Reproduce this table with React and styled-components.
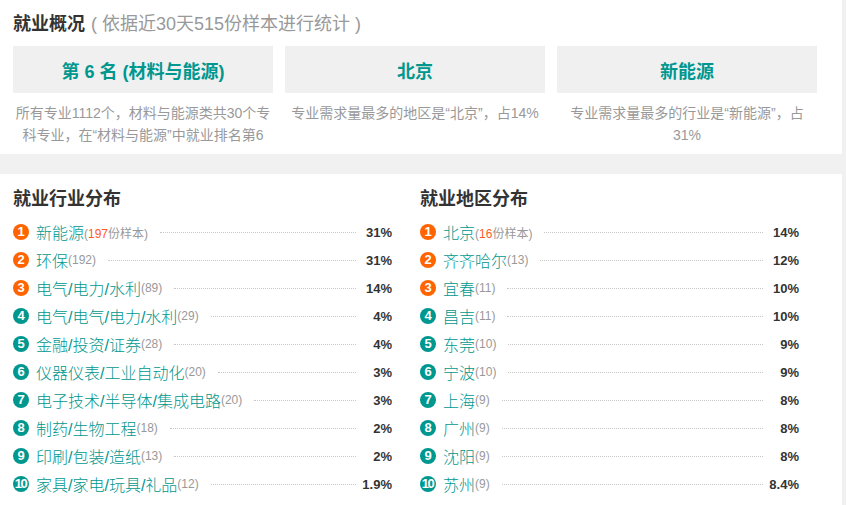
import React from 'react';
import styled, { createGlobalStyle } from 'styled-components';

const industries = [
  { name: '新能源', count: 197, pct: '31%' },
  { name: '环保', count: 192, pct: '31%' },
  { name: '电气/电力/水利', count: 89, pct: '14%' },
  { name: '电气/电气/电力/水利', count: 29, pct: '4%' },
  { name: '金融/投资/证券', count: 28, pct: '4%' },
  { name: '仪器仪表/工业自动化', count: 20, pct: '3%' },
  { name: '电子技术/半导体/集成电路', count: 20, pct: '3%' },
  { name: '制药/生物工程', count: 18, pct: '2%' },
  { name: '印刷/包装/造纸', count: 13, pct: '2%' },
  { name: '家具/家电/玩具/礼品', count: 12, pct: '1.9%' },
];

const regions = [
  { name: '北京', count: 16, pct: '14%' },
  { name: '齐齐哈尔', count: 13, pct: '12%' },
  { name: '宜春', count: 11, pct: '10%' },
  { name: '昌吉', count: 11, pct: '10%' },
  { name: '东莞', count: 10, pct: '9%' },
  { name: '宁波', count: 10, pct: '9%' },
  { name: '上海', count: 9, pct: '8%' },
  { name: '广州', count: 9, pct: '8%' },
  { name: '沈阳', count: 9, pct: '8%' },
  { name: '苏州', count: 9, pct: '8.4%' },
];

const summary = [
  { head: '第 6 名 (材料与能源)', desc: '所有专业1112个，材料与能源类共30个专科专业，在“材料与能源”中就业排名第6' },
  { head: '北京', desc: '专业需求量最多的地区是“北京”，占14%' },
  { head: '新能源', desc: '专业需求量最多的行业是“新能源”，占31%' },
];

const TEAL = '#00978f';

const GlobalStyle = createGlobalStyle`
  body {
    margin: 0;
    background: #f1f1f1;
    font-family: "Liberation Sans", "Noto Sans CJK SC", sans-serif;
    color: #333;
  }
`;

const Page = styled.div`
  width: 842px;
  display: flex;
  flex-direction: column;
  gap: 20px;
`;

const Panel = styled.section`
  background: #fff;
  padding: ${({ $pad }) => $pad};
`;

const Title = styled.h2`
  margin: 0;
  font-size: 18px;
  line-height: 24px;
  font-weight: bold;
  color: #333;
`;

const Sub = styled.span`
  font-weight: normal;
  color: #999;
  margin-left: 6px;
`;

const Cards = styled.div`
  display: flex;
  gap: 12px;
  margin-top: 10px;
`;

const Card = styled.div`
  width: 260px;
  display: flex;
  flex-direction: column;
`;

const CardHead = styled.div`
  height: 47px;
  background: #f0f0f0;
  color: ${TEAL};
  font-size: 18px;
  font-weight: bold;
  display: flex;
  align-items: center;
  justify-content: center;
`;

const CardDesc = styled.p`
  margin: 9px 0 0;
  font-size: 14px;
  line-height: 22px;
  color: #999;
  text-align: center;
`;

const Columns = styled.div`
  display: flex;
  gap: 28px;
`;

const Column = styled.div`
  width: 379px;
`;

const List = styled.ol`
  list-style: none;
  margin: 7px 0 0;
  padding: 0;
`;

const Row = styled.li`
  display: flex;
  align-items: center;
  height: 28px;
`;

const Badge = styled.span`
  flex: none;
  width: 16px;
  height: 16px;
  border-radius: 50%;
  background: ${({ $hot }) => ($hot ? '#ff6400' : TEAL)};
  color: #fff;
  font-size: 13px;
  font-weight: bold;
  line-height: 16px;
  text-align: center;
  letter-spacing: ${({ $wide }) => ($wide ? '-1.5px' : '0')};
  text-indent: ${({ $wide }) => ($wide ? '-1px' : '0')};
  margin-right: 7px;
`;

const Name = styled.span`
  font-size: 16px;
  font-weight: 300;
  color: ${TEAL};
  white-space: nowrap;
`;

const Count = styled.span`
  font-size: 12px;
  color: #999;
`;

const Hot = styled.span`
  color: #ff5a1f;
`;

const Dots = styled.span`
  flex: 1;
  border-top: 1px dotted #c8c8c8;
  margin: 0 6px 0 12px;
`;

const Pct = styled.span`
  width: 30px;
  text-align: right;
  font-size: 13px;
  font-weight: bold;
  color: #333;
`;

const Ranking = ({ title, items }) => (
  <Column>
    <Title>{title}</Title>
    <List>
      {items.map((it, i) => (
        <Row key={it.name + i}>
          <Badge $hot={i < 3} $wide={i === 9}>{i + 1}</Badge>
          <Name>{it.name}</Name>
          <Count>
            (
            {i === 0 ? (
              <>
                <Hot>{it.count}</Hot>份样本
              </>
            ) : (
              it.count
            )}
            )
          </Count>
          <Dots />
          <Pct>{it.pct}</Pct>
        </Row>
      ))}
    </List>
  </Column>
);

const App = () => (
  <Page>
    <GlobalStyle />
    <Panel $pad="12px 13px 8px">
      <Title>
        就业概况<Sub>( 依据近30天515份样本进行统计 )</Sub>
      </Title>
      <Cards>
        {summary.map((s) => (
          <Card key={s.head}>
            <CardHead>{s.head}</CardHead>
            <CardDesc>{s.desc}</CardDesc>
          </Card>
        ))}
      </Cards>
    </Panel>
    <Panel $pad="13px 13px 7px">
      <Columns>
        <Ranking title="就业行业分布" items={industries} />
        <Ranking title="就业地区分布" items={regions} />
      </Columns>
    </Panel>
  </Page>
);

export default App;
